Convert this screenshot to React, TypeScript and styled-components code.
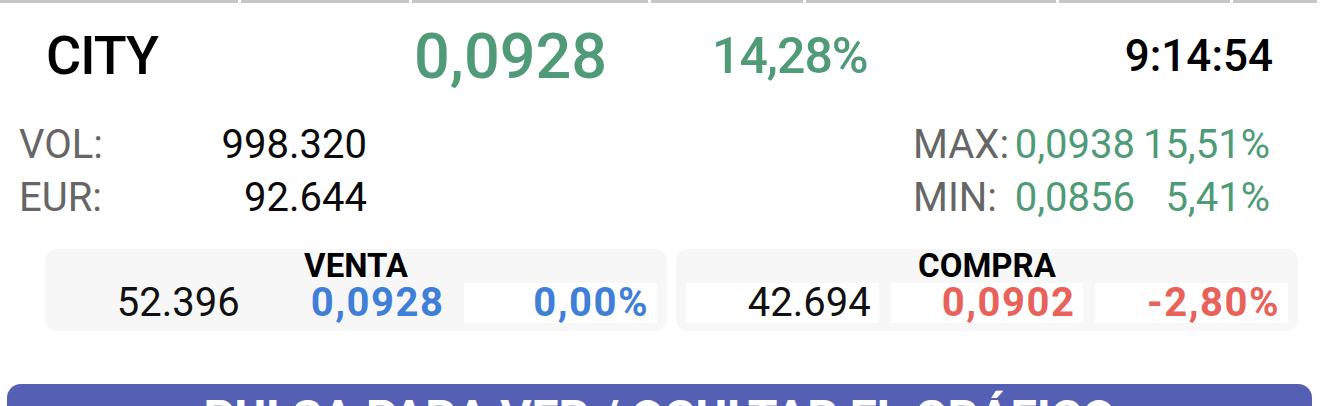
import React from "react";
import styled, { createGlobalStyle } from "styled-components";

const GlobalStyle = createGlobalStyle`
  html, body {
    margin: 0;
    padding: 0;
    background: #ffffff;
  }
  body {
    font-family: Roboto, "Liberation Sans", Arial, sans-serif;
    color: #111111;
    overflow: hidden;
  }
`;

const GREEN = "#4f9a77";
const BLUE = "#3f7fd8";
const RED = "#e8625a";

const Screen = styled.div`
  width: 1320px;
  display: flex;
  flex-direction: column;
`;

/* segmented strip at the very top (tab bar underline) */
const SegmentStrip = styled.div`
  display: flex;
  gap: 3px;
  height: 3px;
`;

const Segment = styled.div<{ $w: number }>`
  flex: 0 0 ${(p) => p.$w}px;
  background: #c6c6c6;
`;

const Header = styled.div`
  display: grid;
  grid-template-columns: 368px 298px auto 1fr;
  align-items: center;
  height: 106px;
  padding: 0 47px 0 46px;
  line-height: 1;
`;

const Ticker = styled.div`
  font-size: 54px;
  font-weight: 500;
  letter-spacing: -1px;
  color: #000;
`;

const BigPrice = styled.div`
  font-size: 63px;
  font-weight: 500;
  color: ${GREEN};
`;

const Change = styled.div`
  font-size: 50px;
  font-weight: 500;
  letter-spacing: -1px;
  color: ${GREEN};
`;

const Clock = styled.div`
  justify-self: end;
  font-size: 44px;
  font-weight: 500;
  color: #000;
`;

const Stats = styled.div`
  display: flex;
  justify-content: space-between;
  padding: 9px 50px 0 19px;
`;

const StatGrid = styled.div<{ $cols: string }>`
  display: grid;
  grid-template-columns: ${(p) => p.$cols};
  grid-auto-rows: 53px;
  align-items: center;
  font-size: 40px;
  line-height: 53px;
`;

const StatLabel = styled.span`
  color: #666666;
`;

const StatValue = styled.span<{ $color?: string }>`
  text-align: right;
  color: ${(p) => p.$color || "#0a0a0a"};
`;

const Books = styled.div`
  display: grid;
  grid-template-columns: 1fr 1fr;
  gap: 9px;
  padding: 0 22px 0 45px;
  margin-top: 25px;
`;

const BookPanel = styled.div`
  background: #f7f7f7;
  border-radius: 12px;
  padding: 0 10px 8px;
`;

const BookTitle = styled.div`
  text-align: center;
  font-size: 33px;
  line-height: 34px;
  font-weight: 700;
  color: #000;
`;

const BookRow = styled.div`
  display: grid;
  grid-template-columns: repeat(3, 1fr);
  gap: 12px;
`;

const BookCell = styled.div<{ $lit?: boolean; $color?: string; $bold?: boolean }>`
  height: 40px;
  line-height: 40px;
  padding-right: 8px;
  text-align: right;
  font-size: 40px;
  font-weight: ${(p) => (p.$bold ? 700 : 400)};
  letter-spacing: ${(p) => (p.$bold ? "1.5px" : "0")};
  color: ${(p) => p.$color || "#111"};
  background: ${(p) => (p.$lit ? "#ffffff" : "transparent")};
`;

const ChartToggle = styled.button`
  margin: 53px 8px 0 7px;
  height: 90px;
  border: none;
  border-radius: 14px;
  background: #5560b5;
  color: #ffffff;
  font-family: Roboto, "Liberation Sans", Arial, sans-serif;
  font-size: 48px;
  font-weight: 700;
  line-height: 48px;
  padding: 10px 0 0;
  text-align: center;
  align-self: stretch;
  display: flex;
  justify-content: center;
  align-items: flex-start;
`;

const segments = [238, 168, 236, 152, 250, 171, 84];

type Cell = { text: string; lit?: boolean; color?: string; bold?: boolean };

const books: { title: string; cells: Cell[] }[] = [
  {
    title: "VENTA",
    cells: [
      { text: "52.396" },
      { text: "0,0928", color: BLUE, bold: true },
      { text: "0,00%", color: BLUE, bold: true, lit: true },
    ],
  },
  {
    title: "COMPRA",
    cells: [
      { text: "42.694", lit: true },
      { text: "0,0902", color: RED, bold: true, lit: true },
      { text: "-2,80%", color: RED, bold: true, lit: true },
    ],
  },
];

const App: React.FC = () => {
  return (
    <>
      <GlobalStyle />
      <Screen>
        <SegmentStrip>
          {segments.map((w, i) => (
            <Segment key={i} $w={w} />
          ))}
        </SegmentStrip>

        <Header>
          <Ticker>CITY</Ticker>
          <BigPrice>0,0928</BigPrice>
          <Change>14,28%</Change>
          <Clock>9:14:54</Clock>
        </Header>

        <Stats>
          <StatGrid $cols="100px 248px">
            <StatLabel>VOL:</StatLabel>
            <StatValue>998.320</StatValue>
            <StatLabel>EUR:</StatLabel>
            <StatValue>92.644</StatValue>
          </StatGrid>
          <StatGrid $cols="97px 125px 135px">
            <StatLabel>MAX:</StatLabel>
            <StatValue $color={GREEN}>0,0938</StatValue>
            <StatValue $color={GREEN}>15,51%</StatValue>
            <StatLabel>MIN:</StatLabel>
            <StatValue $color={GREEN}>0,0856</StatValue>
            <StatValue $color={GREEN}>5,41%</StatValue>
          </StatGrid>
        </Stats>

        <Books>
          {books.map((b) => (
            <BookPanel key={b.title}>
              <BookTitle>{b.title}</BookTitle>
              <BookRow>
                {b.cells.map((c, i) => (
                  <BookCell key={i} $lit={c.lit} $color={c.color} $bold={c.bold}>
                    {c.text}
                  </BookCell>
                ))}
              </BookRow>
            </BookPanel>
          ))}
        </Books>

        <ChartToggle>PULSA PARA VER / OCULTAR EL GRÁFICO</ChartToggle>
      </Screen>
    </>
  );
};

export default App;
